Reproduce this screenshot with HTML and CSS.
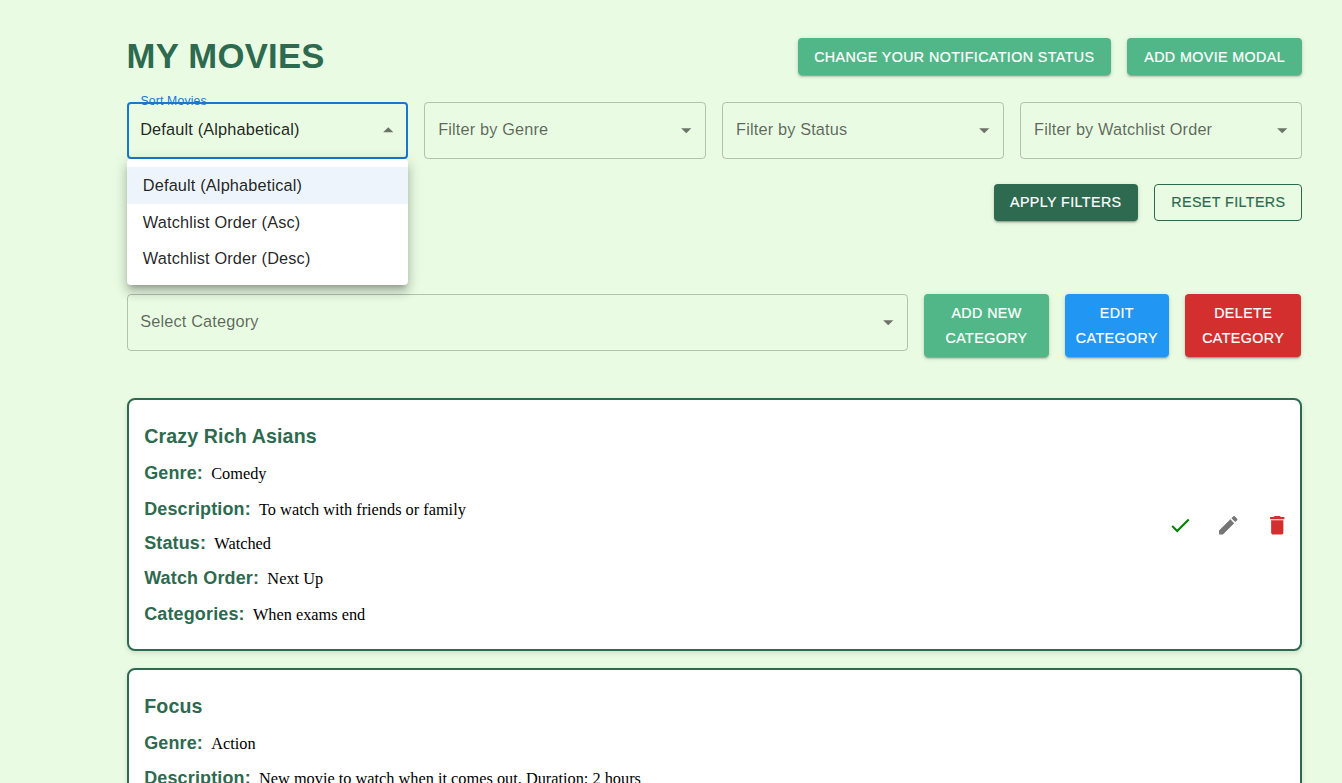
FILE: index.html
```html
<!DOCTYPE html>
<html lang="en">
<head>
<meta charset="utf-8">
<title>My Movies</title>
<link rel="stylesheet" href="styles.css">
</head>
<body>
<main class="page">
  <header class="header">
    <h1 class="heading">MY MOVIES</h1>
    <div class="actions">
      <button class="btn btn-green btn-notify">CHANGE YOUR NOTIFICATION STATUS</button>
      <button class="btn btn-green btn-add">ADD MOVIE MODAL</button>
    </div>
  </header>

  <section class="filters">
    <div class="select select-open">
      <span class="float-label">Sort Movies</span>
      <span class="select-text">Default (Alphabetical)</span>
      <svg class="arrow arrow-up" viewBox="0 0 24 24"><path d="M7 10l5 5 5-5z"/></svg>
      <ul class="menu">
        <li class="menu-item selected">Default (Alphabetical)</li>
        <li class="menu-item">Watchlist Order (Asc)</li>
        <li class="menu-item">Watchlist Order (Desc)</li>
      </ul>
    </div>
    <div class="select">
      <span class="select-text">Filter by Genre</span>
      <svg class="arrow" viewBox="0 0 24 24"><path d="M7 10l5 5 5-5z"/></svg>
    </div>
    <div class="select">
      <span class="select-text">Filter by Status</span>
      <svg class="arrow" viewBox="0 0 24 24"><path d="M7 10l5 5 5-5z"/></svg>
    </div>
    <div class="select">
      <span class="select-text">Filter by Watchlist Order</span>
      <svg class="arrow" viewBox="0 0 24 24"><path d="M7 10l5 5 5-5z"/></svg>
    </div>
  </section>

  <div class="filter-actions">
    <button class="btn btn-dark">APPLY FILTERS</button>
    <button class="btn btn-outline">RESET FILTERS</button>
  </div>

  <section class="categories">
    <div class="select">
      <span class="select-text">Select Category</span>
      <svg class="arrow" viewBox="0 0 24 24"><path d="M7 10l5 5 5-5z"/></svg>
    </div>
    <button class="btn btn-tall btn-green">ADD NEW<br>CATEGORY</button>
    <button class="btn btn-tall btn-blue">EDIT<br>CATEGORY</button>
    <button class="btn btn-tall btn-red">DELETE<br>CATEGORY</button>
  </section>

  <section class="movies">
    <article class="card">
      <div class="details">
        <h2 class="title">Crazy Rich Asians</h2>
        <p class="row"><b class="label">Genre:</b><span class="value">Comedy</span></p>
        <p class="row row-description"><b class="label">Description:</b><span class="value">To watch with friends or family</span></p>
        <p class="row"><b class="label">Status:</b><span class="value">Watched</span></p>
        <p class="row"><b class="label">Watch Order:</b><span class="value">Next Up</span></p>
        <p class="row"><b class="label">Categories:</b><span class="value">When exams end</span></p>
      </div>
      <div class="icons">
        <svg class="icon icon-check" viewBox="0 0 24 24"><path d="M9 16.17 4.83 12l-1.42 1.41L9 19 21 7l-1.41-1.41z"/></svg>
        <svg class="icon icon-edit" viewBox="0 0 24 24"><path d="M3 17.25V21h3.75L17.81 9.94l-3.75-3.75zM20.71 7.04c.39-.39.39-1.02 0-1.41l-2.34-2.34a.9959.9959 0 0 0-1.41 0l-1.83 1.83 3.75 3.75z"/></svg>
        <svg class="icon icon-delete" viewBox="0 0 24 24"><path d="M6 19c0 1.1.9 2 2 2h8c1.1 0 2-.9 2-2V7H6zM19 4h-3.5l-1-1h-5l-1 1H5v2h14z"/></svg>
      </div>
    </article>
    <article class="card">
      <div class="details">
        <h2 class="title">Focus</h2>
        <p class="row"><b class="label">Genre:</b><span class="value">Action</span></p>
        <p class="row"><b class="label">Description:</b><span class="value">New movie to watch when it comes out. Duration: 2 hours</span></p>
      </div>
    </article>
  </section>
</main>
</body>
</html>
```
FILE: styles.css
```css
* { box-sizing: border-box; }

body {
  margin: 0;
  height: 783px;
  overflow: hidden;
  background: #e9fce3;
  font-family: "Liberation Sans", Arial, sans-serif;
}

.page { padding: 38px 40px 0 126.5px; }

.header {
  display: flex;
  justify-content: space-between;
  align-items: flex-start;
  height: 64px;
}

.heading {
  margin: -3px 0 0;
  font-size: 34.68px;
  line-height: 42px;
  letter-spacing: 0.00735em;
  color: #2d6a4f;
}

.actions, .filter-actions { display: flex; gap: 16.3px; }

.btn {
  height: 37.3px;
  padding: 0 16.3px;
  border: 0;
  border-radius: 4px;
  font-family: inherit;
  font-size: 14.28px;
  line-height: 25px;
  letter-spacing: 0.02857em;
  white-space: nowrap;
  color: #fff;
  -webkit-text-stroke: 0.2px currentColor;
  box-shadow: 0 3px 1px -2px rgba(0,0,0,.2), 0 2px 2px 0 rgba(0,0,0,.14), 0 1px 5px 0 rgba(0,0,0,.12);
}
.btn-notify { width: 313.5px; padding-top: 1.4px; }
.btn-add { width: 174.7px; padding-top: 1.4px; }
.btn-green { background: #52b788; }
.btn-dark { width: 144px; background: #2d6a4f; }
.btn-blue { background: #2196f3; }
.btn-red { background: #d32f2f; }
.btn-outline {
  width: 148px;
  border: 1px solid #2d6a4f;
  background: transparent;
  color: #2d6a4f;
  box-shadow: none;
}

.filters {
  display: grid;
  grid-template-columns: repeat(4, 1fr);
  gap: 16.3px;
  height: 82px;
}

.select {
  position: relative;
  display: flex;
  justify-content: space-between;
  align-items: center;
  height: 57.4px;
  padding: 0 6.2px 2px 12.7px;
  border: 1px solid rgba(0,0,0,.23);
  border-radius: 4px;
  font-size: 16.32px;
  letter-spacing: 0.00938em;
  color: rgba(0,0,0,.6);
}
.select-open {
  padding: 0 5.2px 2px 11.7px;
  border: 2px solid #1976d2;
  color: rgba(0,0,0,.87);
}
.arrow {
  width: 24.5px;
  height: 24.5px;
  margin-top: 2px;
  fill: rgba(0,0,0,.54);
}
.arrow-up { transform: rotate(180deg); }

/* Sits across the field's top border */
.float-label {
  position: absolute;
  top: -11px;
  left: 12px;
  font-size: 12.24px;
  line-height: 16px;
  color: #1976d2;
}

.menu {
  position: absolute;
  z-index: 2;
  top: 55px;
  left: -2px;
  right: -2px;
  margin: 0;
  padding: 8px 0;
  list-style: none;
  background: #fff;
  border-radius: 4px;
  box-shadow: 0 5px 5px -3px rgba(0,0,0,.2), 0 8px 10px 1px rgba(0,0,0,.14), 0 3px 14px 2px rgba(0,0,0,.12);
}
.menu-item {
  height: 36.7px;
  padding-left: 16.3px;
  line-height: 36.6px;
}
.selected { background: #edf4fb; }

.filter-actions { justify-content: flex-end; height: 110px; }

.categories {
  display: grid;
  grid-template-columns: 781.5px 124.5px 103.5px 116.5px;
  column-gap: 16.3px;
  align-items: start;
  height: 103.5px;
}
.btn-tall { height: 62.8px; padding: 1.4px 0 0; }

.movies { display: flex; flex-direction: column; gap: 17px; }

.card {
  display: flex;
  justify-content: space-between;
  align-items: center;
  height: 253.6px;
  padding: 0 10.3px 0 15.7px;
  background: #fff;
  border: 2px solid #2d6a4f;
  border-radius: 8px;
  box-shadow: 0 2px 5px rgba(0,0,0,.12);
}
.details { align-self: flex-start; padding-top: 18.4px; }
.title {
  margin: 0 0 0.7px;
  height: 37px;
  font-size: 19.58px;
  line-height: 37px;
  letter-spacing: 0.0075em;
  color: #2d6a4f;
}
.row {
  display: flex;
  align-items: baseline;
  gap: 8.2px;
  height: 35.3px;
  margin: 0;
  line-height: 35.3px;
}
.row-description { line-height: 37.3px; }
.label { font-size: 17.95px; letter-spacing: 0.00938em; color: #2d6a4f; }
.value { font-family: "Liberation Serif", "Times New Roman", serif; font-size: 16.32px; color: #000; }

.icons { display: flex; gap: 24.3px; padding-top: 1px; }
.icon { width: 24.5px; height: 24.5px; }
.icon-check { fill: green; }
.icon-edit { fill: #757575; }
.icon-delete { fill: #d32f2f; }
```
